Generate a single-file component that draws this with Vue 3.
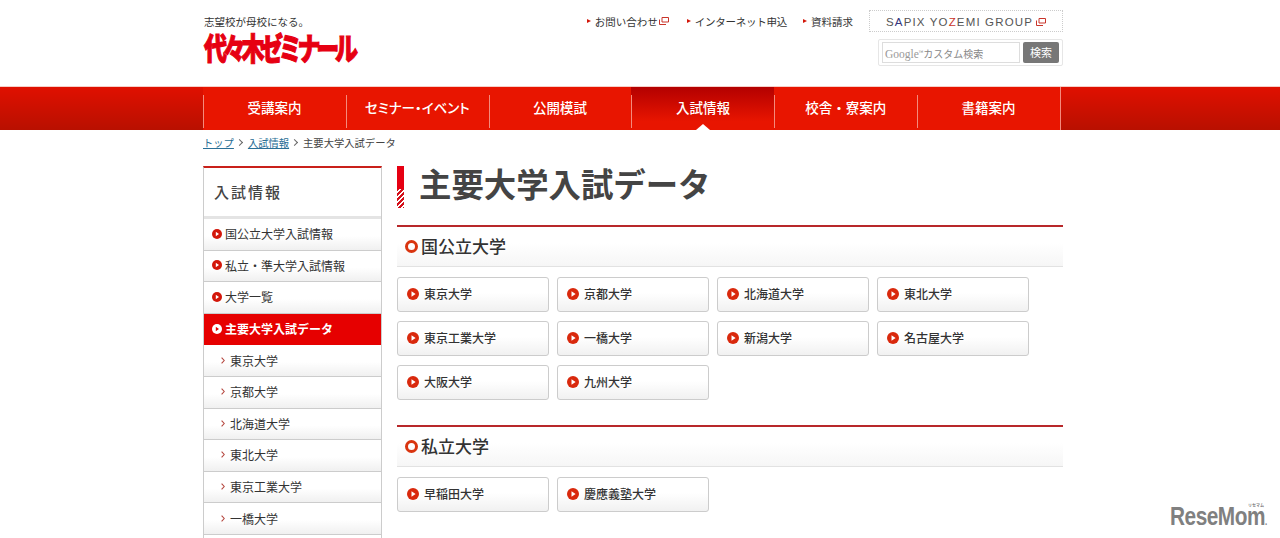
<script setup>
const topLinks = [
  { label: 'お問い合わせ', ext: true, tight: false },
  { label: 'インターネット申込', ext: false, tight: true },
  { label: '資料請求', ext: false, tight: false },
]
const navItems = ['受講案内', 'セミナー・イベント', '公開模試', '入試情報', '校舎・寮案内', '書籍案内']
const sideItems = ['国公立大学入試情報', '私立・準大学入試情報', '大学一覧']
const subItems = ['東京大学', '京都大学', '北海道大学', '東北大学', '東京工業大学', '一橋大学']
const sections = [
  { title: '国公立大学', items: ['東京大学', '京都大学', '北海道大学', '東北大学', '東京工業大学', '一橋大学', '新潟大学', '名古屋大学', '大阪大学', '九州大学'] },
  { title: '私立大学', items: ['早稲田大学', '慶應義塾大学'] },
]
</script>

<template>
  <div class="page">
    <header class="header">
      <div class="brand">
        <div class="tagline">志望校が母校になる。</div>
        <div class="logo">代々木ゼミナール</div>
      </div>
      <div class="util">
        <div class="util-top">
          <a v-for="l in topLinks" :key="l.label" class="top-link" :class="{ tight: l.tight, first: l.ext }">
            <span class="tri"></span>{{ l.label }}
            <svg v-if="l.ext" class="ext" width="10" height="8" viewBox="0 0 10 8"><path d="M3 .5h6.5v4.5H3zM.5 2.5v5H7" fill="none" stroke="#c9342a" stroke-width="1"/></svg>
          </a>
          <div class="sapix">
            <span>S<i class="blue">A</i>PIX YO<i class="red">Z</i>EMI GROUP</span>
            <svg width="10" height="8" viewBox="0 0 10 8"><path d="M3 .5h6.5v4.5H3zM.5 2.5v5H7" fill="none" stroke="#c9342a" stroke-width="1"/></svg>
          </div>
        </div>
        <div class="search">
          <div class="search-input"><span class="g">Google</span><span class="tm">™</span>カスタム検索</div>
          <div class="search-btn">検索</div>
        </div>
      </div>
    </header>

    <nav class="nav">
      <div class="nav-inner">
        <a v-for="n in navItems" :key="n" class="nav-item" :class="{ active: n === '入試情報', kana: n.includes('セミナー') }">{{ n }}</a>
      </div>
    </nav>

    <div class="crumbs">
      <a>トップ</a><span class="sep"></span><a>入試情報</a><span class="sep"></span><span>主要大学入試データ</span>
    </div>

    <div class="columns">
      <aside class="side">
        <div class="side-title">入試情報</div>
        <ul class="side-list">
          <li v-for="s in sideItems" :key="s" class="side-item">
            <svg class="play" width="10" height="10" viewBox="0 0 10 10"><circle cx="5" cy="5" r="5" fill="#d3170a"/><path d="M3.8 2.7 7 5 3.8 7.3z" fill="#fff"/></svg>{{ s }}
          </li>
          <li class="side-item current">
            <svg class="play" width="10" height="10" viewBox="0 0 10 10"><circle cx="5" cy="5" r="5" fill="#fff"/><path d="M3.8 2.7 7 5 3.8 7.3z" fill="#e60000"/></svg>主要大学入試データ
          </li>
          <li v-for="s in subItems" :key="s" class="side-item sub">
            <svg class="chev" width="4" height="7" viewBox="0 0 4 7"><path d="M.6.6 3.2 3.5.6 6.4" fill="none" stroke="#b5473f" stroke-width="1.1"/></svg>{{ s }}
          </li>
        </ul>
      </aside>

      <main class="main">
        <h1 class="h1">主要大学入試データ</h1>
        <section v-for="sec in sections" :key="sec.title" class="sec">
          <h2 class="h2"><span class="ring"></span><span class="h2-text">{{ sec.title }}</span></h2>
          <div class="grid">
            <a v-for="u in sec.items" :key="u" class="uni">
              <svg width="12" height="12" viewBox="0 0 12 12"><circle cx="6" cy="6" r="6" fill="#d9290d"/><path d="M4.5 3.2 8.6 6 4.5 8.8z" fill="#fff"/></svg>
              {{ u }}
            </a>
          </div>
        </section>
      </main>
    </div>

    <div class="mark"><small>リセマム</small><span class="mark-word">ReseMom<em>.</em></span></div>
  </div>
</template>

<style>
html, body { margin: 0; overflow: hidden; background: #fff; }
</style>

<style scoped>
.page {
  position: relative;
  width: 1280px;
  height: 538px;
  overflow: hidden;
  background: #fff;
  color: #333;
  font-family: "Noto Sans CJK JP", "Liberation Sans", sans-serif;
  font-size: 12px;
}
.header {
  width: 860px;
  height: 86px;
  margin-left: 203px;
  display: flex;
  justify-content: space-between;
}
.brand { padding-top: 15px; padding-left: 1px; }
.tagline { font-size: 10.5px; line-height: 14px; color: #333; }
.logo {
  margin-top: 1px;
  width: 153px;
  white-space: nowrap;
  font-size: 23px;
  line-height: 32px;
  font-weight: 900;
  letter-spacing: -4.3px;
  color: #e60012;
  -webkit-text-stroke: .8px #e60012;
  transform: scaleY(1.35);
  transform-origin: 0 50%;
}
.util { width: 478px; padding-top: 10px; }
.util-top { display: flex; align-items: flex-start; justify-content: flex-end; }
.top-link {
  display: flex;
  align-items: center;
  height: 22px;
  font-size: 10.5px;
  color: #333;
  white-space: nowrap;
  margin-right: 16px;
}
.top-link.first { margin-right: 18px; }
.top-link.tight { letter-spacing: -.25px; }
.tri {
  width: 0; height: 0;
  margin-right: 4px;
  border-left: 4px solid #d3170a;
  border-top: 2.5px solid transparent;
  border-bottom: 2.5px solid transparent;
}
.ext { margin-left: 1px; }
.sapix {
  width: 194px;
  height: 22px;
  box-sizing: border-box;
  border: 1px dotted #ccc;
  display: flex;
  align-items: center;
  justify-content: center;
  gap: 3px;
  padding-top: 1px;
  font-family: "Liberation Sans", sans-serif;
  font-size: 11.5px;
  letter-spacing: 1.15px;
  color: #555;
}
.sapix i { font-style: normal; }
.blue { color: #34347c; }
.red { color: #c9342a; }
.search {
  margin: 7px 0 0 auto;
  width: 185px;
  height: 27px;
  box-sizing: border-box;
  border: 1px solid #e6e6e6;
  border-radius: 2px;
  padding: 2px 3px;
  display: flex;
  gap: 3px;
}
.search-input {
  flex: 1;
  box-sizing: border-box;
  border: 1px solid #ddd;
  font-size: 10px;
  line-height: 19px;
  padding-left: 2px;
  color: #888;
  white-space: nowrap;
}
.g { font-family: "Liberation Serif", serif; font-size: 11.5px; color: #999; }
.tm { font-size: 6px; vertical-align: 3px; }
.search-btn {
  width: 36px;
  border-radius: 2px;
  background: #777;
  color: #fff;
  font-size: 11px;
  line-height: 20px;
  text-align: center;
}
.nav {
  height: 44px;
  background: linear-gradient(#e01000, #b81000);
  border-top: 1px solid #f6cfc8;
  box-sizing: border-box;
}
.nav-inner {
  width: 857px;
  height: 43px;
  margin-left: 203px;
  display: flex;
  background: #e81500;
  border-right: 1px solid #f48a7c;
}
.nav-item {
  position: relative;
  flex: 1;
  display: flex;
  align-items: center;
  justify-content: center;
  padding-bottom: 4px;
  box-sizing: border-box;
  color: #fff;
  font-size: 13.5px;
  font-weight: 500;
  white-space: nowrap;
}
.nav-item.kana { font-feature-settings: "palt"; }
.nav-item::before {
  content: "";
  position: absolute;
  left: 0; top: 8px; bottom: 2px;
  width: 1px;
  background: #f48a7c;
}
.nav-item.active { background: linear-gradient(#b30000 0, #e81500 80%); }
.nav-item.active::after {
  content: "";
  position: absolute;
  left: 50%; bottom: 0;
  margin-left: -7px;
  border-left: 7px solid transparent;
  border-right: 7px solid transparent;
  border-bottom: 6px solid #fff;
}
.crumbs {
  margin-left: 203px;
  height: 36px;
  display: flex;
  align-items: center;
  padding-bottom: 12px;
  box-sizing: border-box;
  font-size: 10.3px;
  color: #444;
}
.crumbs a { color: #2a6f96; text-decoration: underline; }
.sep {
  width: 4px; height: 4px;
  margin: 0 6px 0 3px;
  border-top: 1px solid #666;
  border-right: 1px solid #666;
  transform: rotate(45deg);
}
.columns {
  margin-left: 203px;
  width: 860px;
  display: flex;
  gap: 15px;
}
.side {
  width: 179px;
  min-height: 400px;
  flex: none;
  box-sizing: border-box;
  border: 1px solid #ccc;
  border-top: 2px solid #c9201a;
  border-bottom: 0;
}
.side-title {
  height: 48px;
  padding-left: 10px;
  font-size: 15px;
  font-weight: 500;
  letter-spacing: 2px;
  line-height: 48px;
  color: #444;
  border-bottom: 3px solid #e4e4e4;
}
.side-list { list-style: none; margin: 0; padding: 0; }
.side-item {
  height: 31.6px;
  box-sizing: border-box;
  display: flex;
  align-items: center;
  gap: 3px;
  padding-left: 8px;
  padding-bottom: 1px;
  font-size: 12px;
  color: #333;
  white-space: nowrap;
  background: linear-gradient(#fff 55%, #f0f0f0);
  border-bottom: 1px solid #ccc;
}
.side-item.current {
  background: #e60000;
  color: #fff;
  font-weight: 700;
  border-bottom: 1px solid #e60000;
}
.side-item.sub { padding-left: 17px; gap: 5px; }
.main { flex: 1; min-width: 0; width: 666px; }
.h1 {
  position: relative;
  margin: 0 0 17px;
  height: 42px;
  padding-left: 22px;
  font-size: 32.4px;
  line-height: 33px;
  font-weight: 700;
  color: #444;
  white-space: nowrap;
}
.h1::before {
  content: "";
  position: absolute;
  left: 0; top: 0;
  width: 7px; height: 42px;
  background:
    repeating-linear-gradient(135deg, #d4101a 0 2px, #fff 2px 3.5px) 0 100% / 7px 19px no-repeat,
    #e60012;
}
.sec { margin-bottom: 25px; }
.h2 {
  margin: 0 0 10px;
  height: 42px;
  box-sizing: border-box;
  display: flex;
  align-items: center;
  gap: 3px;
  padding-left: 8px;
  border-top: 2px solid #b8282a;
  border-bottom: 1px solid #e2e2e2;
  background: linear-gradient(#fff 40%, #f6f6f6);
  font-size: 17px;
  font-weight: 500;
  color: #333;
}
.h2-text { margin-top: -2px; }
.ring {
  width: 13px; height: 13px;
  box-sizing: border-box;
  border: 3px solid #d9340f;
  border-radius: 50%;
}
.grid {
  display: grid;
  grid-template-columns: repeat(4, 152px);
  grid-auto-rows: 35px;
  column-gap: 8px;
  row-gap: 9px;
}
.uni {
  box-sizing: border-box;
  display: flex;
  align-items: center;
  gap: 5px;
  padding-left: 9px;
  padding-bottom: 2px;
  border: 1px solid #ccc;
  border-radius: 3px;
  background: linear-gradient(#fff 45%, #f1f1f1);
  font-size: 12px;
  font-weight: 500;
  color: #333;
}
.mark {
  position: absolute;
  left: 1170px;
  top: 503px;
  width: 97px;
  height: 26px;
  font-family: "Liberation Sans", sans-serif;
  font-weight: 700;
  color: #808080;
}
.mark-word {
  display: block;
  font-size: 26px;
  line-height: 26px;
  white-space: nowrap;
  letter-spacing: -.6px;
  transform: scaleX(.8);
  transform-origin: 0 0;
}
.mark small {
  position: absolute;
  right: 3px; top: 0;
  font-family: "Noto Sans CJK JP", sans-serif;
  font-size: 4px;
  line-height: 5px;
}
.mark em { font-style: normal; font-size: 10px; }
</style>
